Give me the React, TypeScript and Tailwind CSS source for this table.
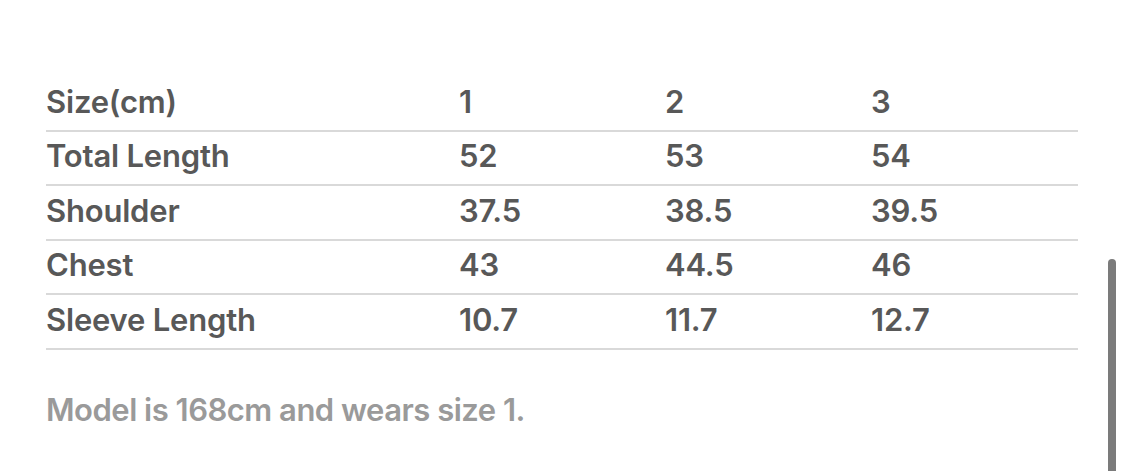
const rows = [
  { label: 'Size(cm)', v: ['1', '2', '3'] },
  { label: 'Total Length', v: ['52', '53', '54'] },
  { label: 'Shoulder', v: ['37.5', '38.5', '39.5'] },
  { label: 'Chest', v: ['43', '44.5', '46'] },
  { label: 'Sleeve Length', v: ['10.7', '11.7', '12.7'] },
]

export default function App() {
  return (
    <div className="relative w-[1125px] h-[471px] bg-white overflow-hidden font-['Inter',sans-serif]">
      <div className="pt-[77px] pl-[46px] w-[1078px]">
        {rows.map(r => (
          <div key={r.label} className="flex items-center h-[54.5px] pb-[3px] border-b-2 border-[#d9d9d9] text-[31px] font-semibold tracking-[-0.2px] text-[#585858]">
            <div className="w-[413px]">{r.label}</div>
            {r.v.map((x, i) => (
              <div key={i} className="w-[206px]">{x}</div>
            ))}
          </div>
        ))}
        <p className="mt-[44px] text-[31px] font-semibold tracking-[-0.5px] text-[#9a9a9a] leading-none">
          Model is 168cm and wears size 1.
        </p>
      </div>
      <div className="absolute left-[1108px] top-[259px] w-[8px] h-[230px] rounded-full bg-[#7b7b7b]" />
    </div>
  )
}
